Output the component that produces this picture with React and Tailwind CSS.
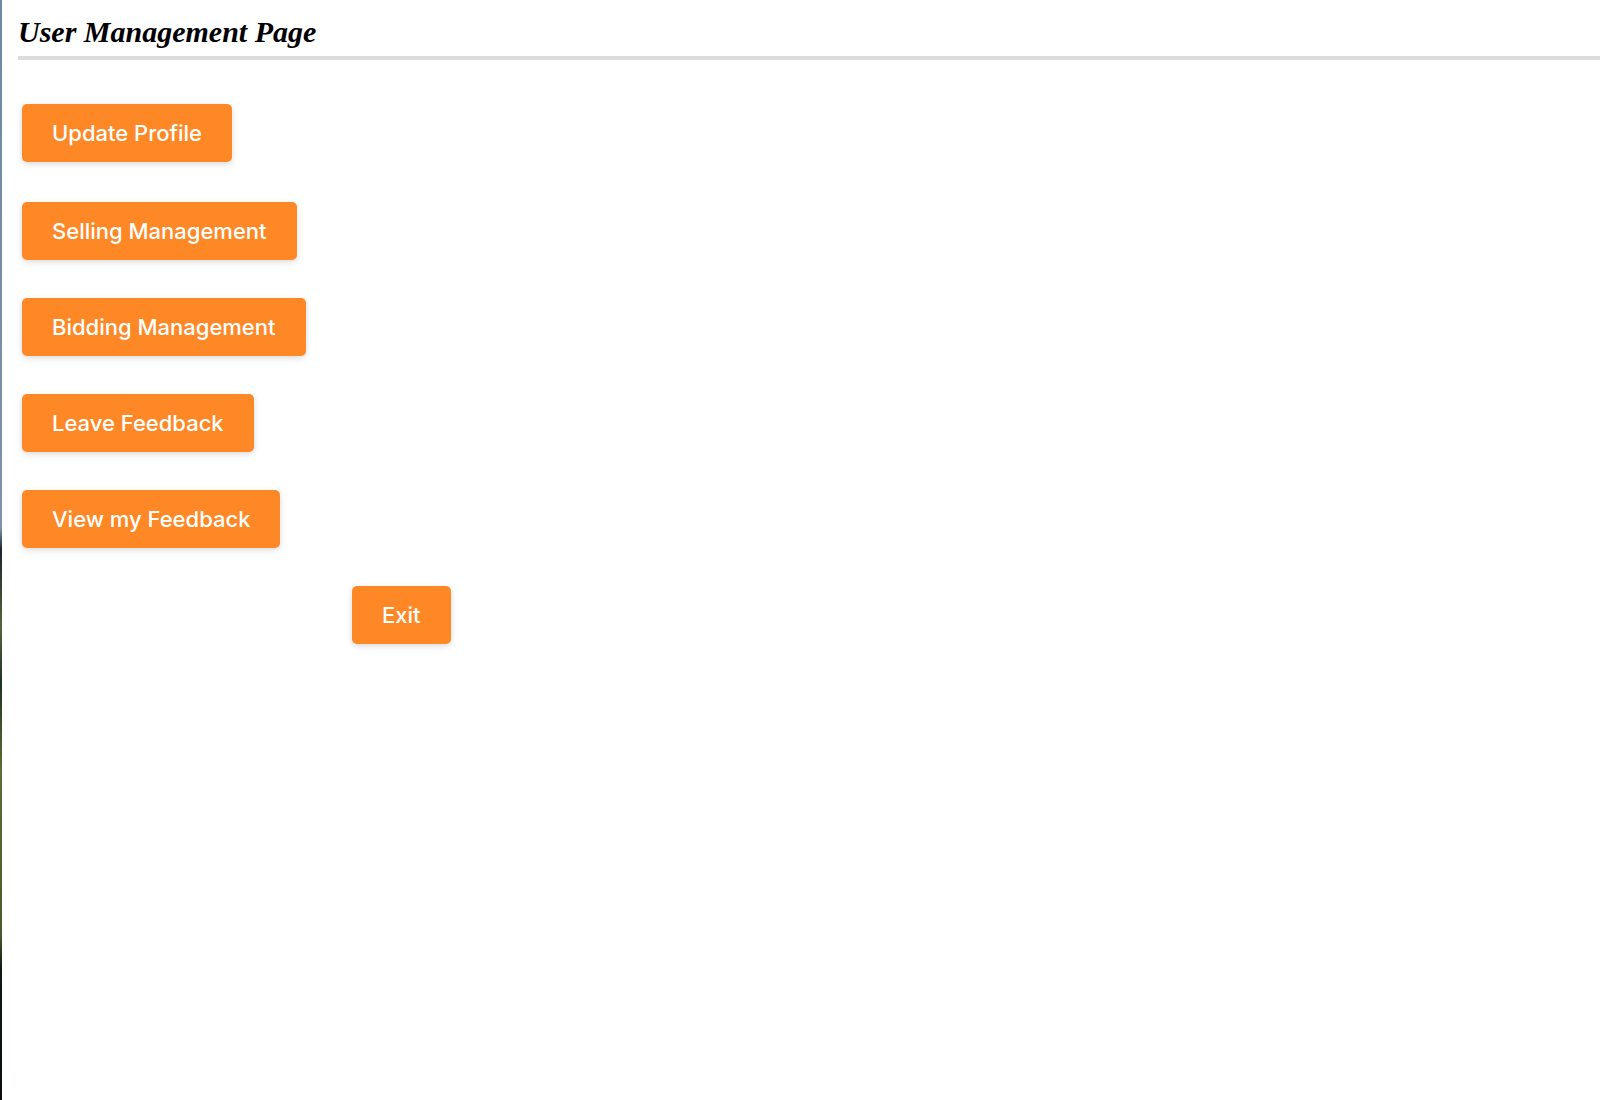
import React from 'react';

const menuItems = [
  { label: 'Update Profile', gap: 'mt-[44px]' },
  { label: 'Selling Management', gap: 'mt-[40px]' },
  { label: 'Bidding Management', gap: 'mt-[38px]' },
  { label: 'Leave Feedback', gap: 'mt-[38px]' },
  { label: 'View my Feedback', gap: 'mt-[38px]' },
];

const OrangeButton = ({ children, className = '' }) => (
  <button
    className={`h-[58px] px-[30px] rounded-[5px] bg-[#fe8726] text-white text-[22px] font-medium font-[Inter,'Noto_Sans',sans-serif] shadow-[0_2px_6px_rgba(0,0,0,0.15)] ${className}`}
  >
    {children}
  </button>
);

const App = () => {
  return (
    <div className="flex min-h-screen bg-white">
      {/* desktop peeking through at the window edge */}
      <div className="w-[2px] shrink-0 bg-[linear-gradient(to_bottom,#6d88a3_0%,#7b94ab_48%,#1b2430_50%,#55663a_57%,#1e3326_62%,#5d6e33_70%,#4b5a2c_85%,#0f1a14_88%,#0a0d10_100%)]" />
      <div className="flex-1 pl-4">
        <h1 className="mt-[15px] pb-[7px] border-b-4 border-[#dcdcdc] text-[30px] leading-[34px] font-bold italic font-['Liberation_Serif',serif] text-black">
          User Management Page
        </h1>
        <div className="flex flex-col items-start pl-1">
          {menuItems.map((item) => (
            <OrangeButton key={item.label} className={item.gap}>
              {item.label}
            </OrangeButton>
          ))}
          <OrangeButton className="mt-[38px] ml-[330px]">Exit</OrangeButton>
        </div>
      </div>
    </div>
  );
};

export default App;
